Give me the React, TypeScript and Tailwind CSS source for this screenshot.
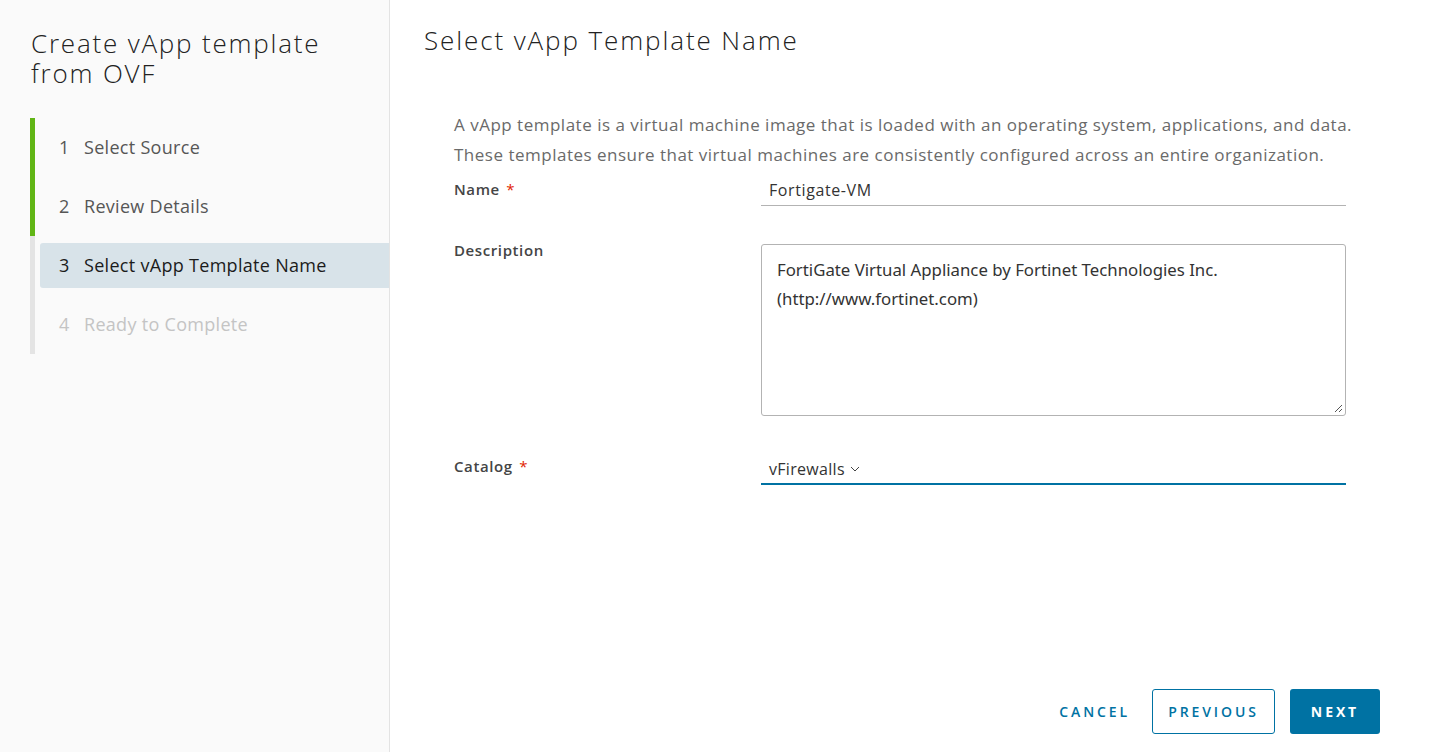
import React from "react";

const F = { fontFamily: "'Open Sans', Lato, sans-serif" };

function Step({ n, label, state, bar }: { n: number; label: string; state: "done" | "active" | "todo"; bar: string }) {
  const color =
    state === "active" ? "text-[#1b1b1b]" : state === "done" ? "text-[#565656]" : "text-[#c4c4c4]";
  return (
    <div className={`border-l-[5px] ${bar} pl-[5px] py-[7px]`}>
      <div
        className={`h-[45px] flex items-center pl-[19px] rounded-l-[3px] text-[18px] tracking-[0.3px] ${color} ${
          state === "active" ? "bg-[#d8e3e9]" : ""
        }`}
      >
        <span className="w-[25px]">{n}</span>
        <span>{label}</span>
      </div>
    </div>
  );
}

export default function App() {
  return (
    <div className="flex h-[752px] w-[1438px] bg-white overflow-hidden" style={F}>
      <aside className="w-[390px] shrink-0 h-full bg-[#fafafa] border-r border-[#e3e3e3]">
        <h1 className="ml-[31px] mt-[28px] w-[310px] text-[26px] leading-[30px] font-light tracking-[1.8px] text-[#222]">
          Create vApp template from OVF
        </h1>
        <div className="ml-[30px] mt-[30px]">
          <Step n={1} label="Select Source" state="done" bar="border-[#60b515]" />
          <Step n={2} label="Review Details" state="done" bar="border-[#60b515]" />
          <Step n={3} label="Select vApp Template Name" state="active" bar="border-[#e4e4e4]" />
          <Step n={4} label="Ready to Complete" state="todo" bar="border-[#e4e4e4]" />
        </div>
      </aside>
      <main className="flex-1 flex flex-col h-full">
        <h2 className="pl-[34px] pt-[23px] text-[26px] leading-[34px] font-light tracking-[1.9px] text-[#222]">
          Select vApp Template Name
        </h2>
        <div className="pl-[64px] pr-[60px] mt-[53px]">
          <p className="text-[17px] leading-[30px] tracking-[0.5px] text-[#6a6a6a] whitespace-nowrap">
            A vApp template is a virtual machine image that is loaded with an operating system, applications, and data.
            <br />
            These templates ensure that virtual machines are consistently configured across an entire organization.
          </p>
          <div className="flex mt-[4px]">
            <div className="w-[307px] text-[15px] font-semibold tracking-[0.6px] text-[#454545] pt-[4px]">
              Name <span className="text-[#e12200] font-normal ml-[2px]">*</span>
            </div>
            <div className="w-[585px] h-[32px] border-b border-[#b3b3b3] pl-[8px] pt-[4px] text-[16px] tracking-[0.6px] text-[#333]">
              Fortigate-VM
            </div>
          </div>
          <div className="flex items-start mt-[34px]">
            <div className="w-[307px] text-[15px] leading-[20px] font-semibold tracking-[0.6px] text-[#454545]">
              Description
            </div>
            <div
              className="mt-[4px] w-[585px] h-[172px] border border-[#b3b3b3] rounded-[3px] pl-[15px] pt-[10px] text-[16.8px] leading-[29px] text-[#333] relative"
              style={{ fontFamily: "'Noto Sans', sans-serif" }}
            >
              <div>FortiGate Virtual Appliance by Fortinet Technologies Inc.</div>
              <div>(http://www.fortinet.com)</div>
              <svg className="absolute right-[2px] bottom-[2px]" width="9" height="9" viewBox="0 0 9 9">
                <path d="M8 1L1 8M8 5L5 8" stroke="#555" strokeWidth="1" />
              </svg>
            </div>
          </div>
          <div className="flex mt-[36px]">
            <div className="w-[307px] text-[15px] font-semibold tracking-[0.6px] text-[#454545] pt-[3px]">
              Catalog <span className="text-[#e12200] font-normal ml-[2px]">*</span>
            </div>
            <div className="w-[585px] h-[33px] border-b-2 border-[#0072a3] pl-[8px] pt-[5px] text-[16px] tracking-[0.3px] text-[#333] flex items-start gap-[5px]">
              <span>vFirewalls</span>
              <svg className="mt-[9px]" width="10" height="6" viewBox="0 0 10 6">
                <path d="M1 1L5 5L9 1" fill="none" stroke="#444" strokeWidth="1" />
              </svg>
            </div>
          </div>
        </div>
        <div className="mt-auto flex justify-end items-center pr-[58px] pb-[18px]">
          <button className="h-[45px] pr-[22px] text-[14px] font-semibold tracking-[2.9px] text-[#0072a3]">
            CANCEL
          </button>
          <button className="h-[45px] w-[123px] border border-[#0072a3] rounded-[3px] text-[14px] font-semibold tracking-[2.9px] text-[#0072a3] bg-white">
            PREVIOUS
          </button>
          <button className="ml-[15px] h-[45px] w-[90px] rounded-[3px] bg-[#0072a3] text-[14px] font-bold tracking-[2.9px] text-white">
            NEXT
          </button>
        </div>
      </main>
    </div>
  );
}
